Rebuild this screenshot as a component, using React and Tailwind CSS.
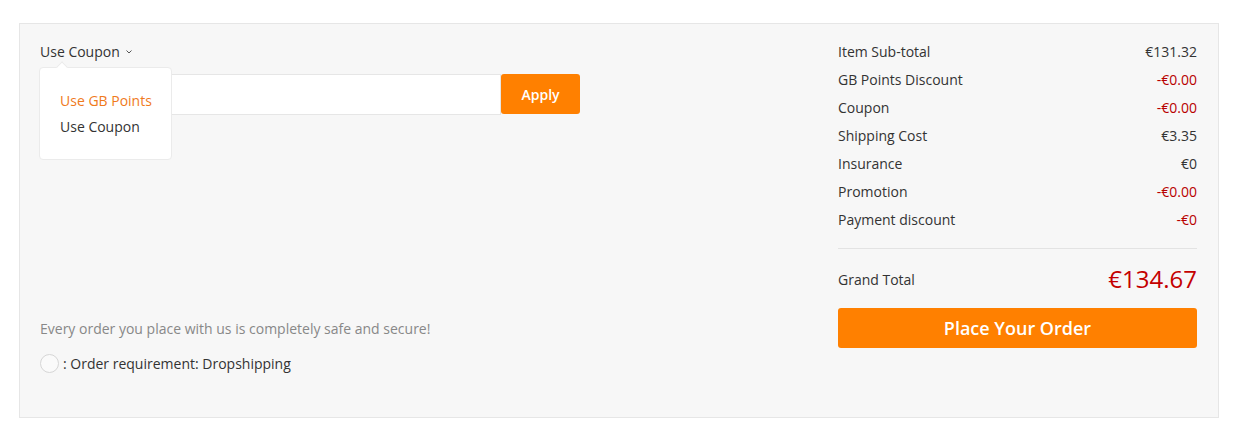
import React from 'react';

const rows = [
  { label: 'Item Sub-total', value: '€131.32', red: false },
  { label: 'GB Points Discount', value: '-€0.00', red: true },
  { label: 'Coupon', value: '-€0.00', red: true },
  { label: 'Shipping Cost', value: '€3.35', red: false },
  { label: 'Insurance', value: '€0', red: false },
  { label: 'Promotion', value: '-€0.00', red: true },
  { label: 'Payment discount', value: '-€0', red: true },
];

export default function App() {
  return (
    <div className="bg-white pt-[23px] pl-[19px]" style={{ fontFamily: '"Open Sans", sans-serif' }}>
      <div className="w-[1200px] h-[395px] bg-[#f7f7f7] border border-[#e6e6e6] flex justify-between pl-[20px] pr-[21px] pt-[13px] text-[14px] text-[#333]">
        {/* Left */}
        <div className="flex flex-col w-[540px]">
          <div className="h-[28px] flex items-center gap-[6px]">
            <span>Use Coupon</span>
            <svg width="6" height="4" viewBox="0 0 6 4" className="mt-[1px]">
              <path d="M0.5 0.5 L3 3 L5.5 0.5" fill="none" stroke="#555" strokeWidth="1" />
            </svg>
          </div>
          <div className="relative mt-[9px] flex h-[41px]">
            <div className="flex-1 bg-white border border-[#e6e6e6]" />
            <button className="w-[79px] h-[40px] bg-[#ff8000] text-white font-semibold rounded-[3px] text-[14px]">Apply</button>
            <div className="absolute left-[-1px] top-[-7px] w-[133px] h-[93px] bg-white border border-[#ebebeb] rounded-[4px] pl-[20px] pt-[20px] leading-[26px]">
              <div className="absolute left-[18px] top-[-5px] w-[8px] h-[8px] bg-white border-l border-t border-[#ebebeb] rotate-45" />
              <div className="text-[#f07a1c]">Use GB Points</div>
              <div>Use Coupon</div>
            </div>
          </div>
          <div className="mt-[204px] leading-[20px] text-[#888]">Every order you place with us is completely safe and secure!</div>
          <div className="mt-[14px] flex items-center h-[20px]">
            <span className="w-[19px] h-[19px] rounded-full border border-[#d6d6d6] bg-[#fafafa] mr-[4px]" />
            <span>: Order requirement: Dropshipping</span>
          </div>
        </div>

        {/* Right */}
        <div className="w-[359px] flex flex-col">
          {rows.map((r) => (
            <div key={r.label} className="h-[28px] flex items-center justify-between">
              <span>{r.label}</span>
              <span className={r.red ? 'text-[#b80000]' : ''}>{r.value}</span>
            </div>
          ))}
          <div className="mt-[15px] border-t border-[#e3e3e3]" />
          <div className="mt-[8px] h-[44px] flex items-center justify-between">
            <span>Grand Total</span>
            <span className="text-[24px] text-[#c40000]">€134.67</span>
          </div>
          <button className="mt-[7px] h-[40px] w-full bg-[#ff8000] rounded-[3px] text-white text-[18px] font-semibold">Place Your Order</button>
        </div>
      </div>
    </div>
  );
}
